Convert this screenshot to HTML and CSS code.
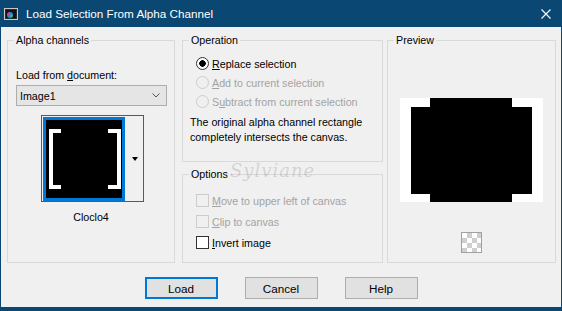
FILE: index.html
```html
<!DOCTYPE html>
<html lang="en">
<head>
  <meta charset="UTF-8">
  <title>Load Selection From Alpha Channel</title>
  <link rel="stylesheet" href="styles.css">
</head>
<body>

  <div class="window">
    <div class="titlebar">
      <svg class="app-icon" width="14" height="12" viewBox="0 0 14 12">
        <rect x="0.5" y="0.5" width="13" height="11" fill="#2b2b2b" stroke="#c8c8c8"/>
        <rect x="2" y="2" width="10" height="8" fill="#111"/>
        <circle cx="6" cy="7" r="3" fill="#1d8fd6"/>
        <circle cx="5" cy="6" r="1.4" fill="#d83a8c"/>
        <circle cx="7.5" cy="8" r="1.2" fill="#52b84a"/>
      </svg>
      <span class="title">Load Selection From Alpha Channel</span>
      <svg class="close" width="10" height="10" viewBox="0 0 10 10">
        <path d="M0.5 0.5 L9.5 9.5 M9.5 0.5 L0.5 9.5" stroke="#fff" stroke-width="1.1"/>
      </svg>
    </div>

    <div class="client">
      <div class="groups">

        <fieldset class="group alpha">
          <legend>Alpha channels</legend>
          <div class="field-label">Load from <u>d</u>ocument:</div>
          <div class="select">
            <span>Image1</span>
            <svg width="8" height="5" viewBox="0 0 8 5"><path d="M0.5 0.5 L4 4 L7.5 0.5" fill="none" stroke="#555"/></svg>
          </div>
          <div class="thumbbox">
            <div class="thumb">
              <svg width="76" height="78" viewBox="0 0 76 78">
                <rect width="76" height="78" fill="#000"/>
                <rect x="3" y="9" width="4" height="60" fill="#fff"/>
                <rect x="3" y="9" width="12" height="4" fill="#fff"/>
                <rect x="3" y="65" width="12" height="4" fill="#fff"/>
                <rect x="71" y="9" width="4" height="60" fill="#fff"/>
                <rect x="62" y="9" width="13" height="4" fill="#fff"/>
                <rect x="62" y="65" width="13" height="4" fill="#fff"/>
              </svg>
            </div>
            <div class="thumb-drop"><span class="tri"></span></div>
          </div>
          <div class="thumb-name">Cloclo4</div>
        </fieldset>

        <div class="middle">
          <fieldset class="group operation">
            <legend>Operation</legend>
            <div class="row"><span class="radio checked"></span><span><u>R</u>eplace selection</span></div>
            <div class="row disabled"><span class="radio"></span><span><u>A</u>dd to current selection</span></div>
            <div class="row disabled"><span class="radio"></span><span>S<u>u</u>btract from current selection</span></div>
            <div class="note">The original alpha channel rectangle<br>completely intersects the canvas.</div>
          </fieldset>

          <fieldset class="group options">
            <legend>Options</legend>
            <div class="row check disabled"><span class="box"></span><span><u>M</u>ove to upper left of canvas</span></div>
            <div class="row check disabled"><span class="box"></span><span><u>C</u>lip to canvas</span></div>
            <div class="row check"><span class="box"></span><span><u>I</u>nvert image</span></div>
          </fieldset>
        </div>

        <fieldset class="group preview">
          <legend>Preview</legend>
          <svg class="preview-img" width="143" height="104" viewBox="0 0 143 104">
            <rect width="143" height="104" fill="#fff"/>
            <rect x="11" y="9" width="121" height="87" fill="#000"/>
            <rect x="30" y="0" width="82" height="104" fill="#000"/>
          </svg>
          <div class="checker"></div>
        </fieldset>

      </div>

      <div class="buttons">
        <button class="default">Load</button>
        <button>Cancel</button>
        <button>Help</button>
      </div>

      <div class="watermark">Sylviane</div>
    </div>
  </div>

</body>
</html>
```

FILE: styles.css
```css
body {
  margin: 0;
  font-family: "Liberation Sans", Arial, sans-serif;
  font-size: 10.7px;
  color: #000;
}

.window {
  width: 562px;
  height: 311px;
  box-sizing: border-box;
  background: #0a4772;
  padding: 0 1px 4px;
  display: flex;
  flex-direction: column;
}

.titlebar {
  height: 27px;
  display: flex;
  align-items: center;
  color: #fff;
  font-size: 11.7px;
}

.app-icon {
  margin: 0 8px 0 3px;
}

.title {
  flex: 1;
}

.close {
  margin-right: 10px;
}

.client {
  flex: 1;
  background: #f0f0f0;
  position: relative;
}

.groups {
  display: flex;
  margin: 6px 0 0 6px;
  height: 230px;
}

.group {
  margin: 0;
  padding: 0;
  min-width: 0;
  box-sizing: border-box;
  border: 1px solid #d9d9d9;
}

.group legend {
  margin-left: 6px;
  padding: 0 2px;
  line-height: 14px;
}

.alpha {
  width: 168px;
  height: 230px;
}

.middle {
  width: 201px;
  margin-left: 7px;
  display: flex;
  flex-direction: column;
  gap: 5px;
}

.operation {
  height: 129px;
}

.options {
  height: 96px;
}

.preview {
  width: 169px;
  height: 230px;
  margin-left: 4px;
  display: flex;
  flex-direction: column;
  align-items: center;
}

/* alpha channels */

.field-label {
  margin: 21px 0 0 8px;
  line-height: 14px;
}

.select {
  margin: 3px 0 0 8px;
  width: 151px;
  height: 21px;
  box-sizing: border-box;
  border: 1px solid #adadad;
  background: #e5e5e5;
  display: flex;
  align-items: center;
  justify-content: space-between;
  padding: 0 6px 0 3px;
}

.thumbbox {
  margin: 9px 0 0 33px;
  width: 103px;
  height: 87px;
  box-sizing: border-box;
  border: 1px solid #5a5a5a;
  padding: 1px 0 0 1px;
  display: flex;
}

.thumb {
  width: 76px;
  height: 78px;
  border: 3px solid #0078d7;
}

.thumb svg {
  display: block;
}

.thumb-drop {
  flex: 1;
  display: flex;
  align-items: center;
  justify-content: center;
  padding-left: 1px;
}

.tri {
  width: 0;
  height: 0;
  border-left: 3.5px solid transparent;
  border-right: 3.5px solid transparent;
  border-top: 4px solid #000;
}

.thumb-name {
  margin-top: 8px;
  line-height: 14px;
  text-align: center;
}

/* operation / options */

.row {
  display: flex;
  align-items: center;
  gap: 3px;
  height: 19px;
  padding-left: 13px;
}

.operation .row:first-of-type {
  margin-top: 7px;
}

.options .row {
  height: 21px;
}

.options .row:first-of-type {
  margin-top: 9px;
}

.disabled {
  color: #a3a3a3;
}

.radio {
  width: 13px;
  height: 13px;
  box-sizing: border-box;
  border-radius: 50%;
  border: 1px solid #cccccc;
  background: #f0f0f0;
}

.radio.checked {
  border-color: #333;
  background: radial-gradient(circle, #000 0 3px, #fff 3.5px);
}

.box {
  width: 13px;
  height: 13px;
  box-sizing: border-box;
  border: 1px solid #333;
  background: #fff;
}

.disabled .box {
  border-color: #cccccc;
  background: #f0f0f0;
}

.note {
  margin: 4px 0 0 7px;
  line-height: 15px;
}

/* preview */

.preview-img {
  display: block;
  margin-top: 51px;
}

.checker {
  margin-top: 30px;
  width: 21px;
  height: 21px;
  box-sizing: border-box;
  border: 1px solid #a0a0a0;
  background: repeating-conic-gradient(#cfcfcf 0 25%, #fff 0 50%) 0 0 / 10px 10px;
}

/* buttons */

.buttons {
  display: flex;
  justify-content: center;
  gap: 27px;
  margin-top: 14px;
}

.buttons button {
  width: 73px;
  height: 22px;
  font: inherit;
  font-size: 11.7px;
  border: 1px solid #adadad;
  background: #e1e1e1;
  padding: 0;
}

.buttons .default {
  border: 2px solid #0078d7;
}

.watermark {
  position: absolute;
  left: 229px;
  top: 133px;
  font-family: "DejaVu Serif", serif;
  font-style: italic;
  font-size: 18px;
  letter-spacing: 1px;
  color: rgba(120, 120, 120, 0.25);
  pointer-events: none;
}
```
